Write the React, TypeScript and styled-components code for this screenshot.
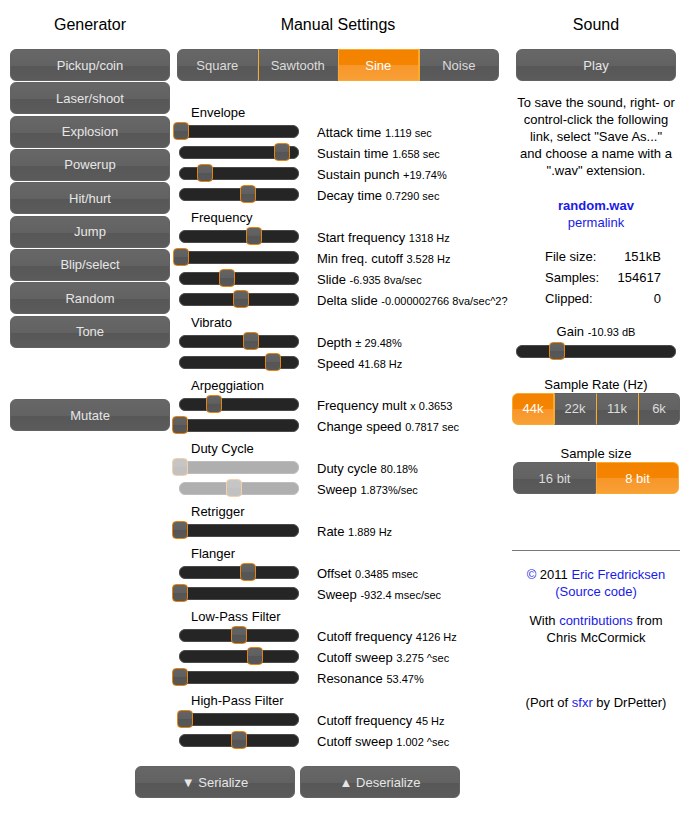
import React from 'react';
import styled, { createGlobalStyle } from 'styled-components';

const GlobalStyle = createGlobalStyle`
  body {
    margin: 0;
    background: #ffffff;
    font-family: "Liberation Sans", Arial, sans-serif;
    font-size: 13px;
    color: #111;
  }
`;

// --- layout ---
const Page = styled.div`
  width: 687px;
  height: 813px;
  box-sizing: border-box;
  padding-left: 10px;
`;

const Columns = styled.div`
  display: flex;
  align-items: flex-start;
`;

const Column = styled.div<{ $width: number; $gap?: number }>`
  width: ${p => p.$width}px;
  margin-left: ${p => p.$gap ?? 0}px;
  display: flex;
  flex-direction: column;
`;

const ColumnTitle = styled.h2`
  margin: 0;
  padding: 15px 0 14px;
  font-size: 16px;
  line-height: 20px;
  font-weight: normal;
  text-align: center;
  color: #000;
`;

// --- buttons ---
const glass = `linear-gradient(to bottom, #676767 0%, #626262 52%, #575757 52%, #5b5b5b 100%)`;
const glassActive = `linear-gradient(to bottom, #f28200 0%, #f58400 50%, #f7962a 50%, #f8a036 100%)`;

const Button = styled.div<{ $mt?: number; $mx?: number }>`
  height: 32px;
  box-sizing: border-box;
  margin: ${p => p.$mt ?? 0}px ${p => p.$mx ?? 0}px 0;
  border: 1px solid #626262;
  border-radius: 6px;
  background: ${glass};
  color: #e6e6e6;
  font-size: 13px;
  display: flex;
  align-items: center;
  justify-content: center;
  cursor: pointer;
`;

const GeneratorList = styled.div`
  display: flex;
  flex-direction: column;
  gap: 1.34px;
`;

const ButtonSet = styled.div<{ $mx?: number }>`
  display: flex;
  height: 32px;
  margin: 0 ${p => p.$mx ?? 0}px;
`;

const SetItem = styled.div<{ $active?: boolean }>`
  flex: 1;
  box-sizing: border-box;
  display: flex;
  align-items: center;
  justify-content: center;
  font-size: 13px;
  cursor: pointer;
  color: ${p => (p.$active ? '#ffffff' : '#dcdcdc')};
  background: ${p => (p.$active ? glassActive : glass)};
  border: 1px solid ${p => (p.$active ? '#fbab2c' : '#626262')};
  & + & {
    border-left-color: ${p => (p.$active ? '#fbab2c' : '#575757')};
  }
  &:first-child {
    border-radius: 6px 0 0 6px;
  }
  &:last-child {
    border-radius: 0 6px 6px 0;
  }
`;

// --- sliders ---
const Track = styled.div<{ $width: number; $disabled?: boolean }>`
  position: relative;
  flex-shrink: 0;
  width: ${p => p.$width}px;
  height: 13px;
  box-sizing: border-box;
  border: 1px solid #4a4a4a;
  border-radius: 6px;
  background: #252525;
  opacity: ${p => (p.$disabled ? 0.36 : 1)};
`;

const Handle = styled.div`
  position: absolute;
  top: -4px;
  width: 16px;
  height: 18px;
  margin-left: -8px;
  box-sizing: border-box;
  border: 1px solid #e8830c;
  border-radius: 4px;
  background: linear-gradient(to bottom, #646464 0%, #5f5f5f 50%, #555555 50%, #585858 100%);
`;

const Slider = ({ value, width, disabled }: { value: number; width: number; disabled?: boolean }) => (
  <Track $width={width} $disabled={disabled}>
    <Handle style={{ left: `${value * 100}%` }} />
  </Track>
);

const Sections = styled.div`
  margin-top: 22.5px;
  display: flex;
  flex-direction: column;
`;

const Section = styled.div`
  margin-bottom: 4px;
`;

const SectionTitle = styled.div`
  height: 17px;
  line-height: 17px;
  padding-left: 14px;
  font-size: 13px;
  color: #000;
`;

const ParamRow = styled.div`
  height: 21px;
  display: flex;
  align-items: center;
  padding-left: 2px;
  gap: 18px;
`;

const ParamLabel = styled.span`
  font-size: 13px;
  color: #000;
  white-space: nowrap;
  padding-top: 2px;
`;

const Small = styled.span`
  font-size: 11px;
`;

// --- right column ---
const Info = styled.p<{ $mt: number }>`
  margin: ${p => p.$mt}px 0 0;
  text-align: center;
  line-height: 17px;
  font-size: 13px;
  color: #000;
`;

const Link = styled.a<{ $bold?: boolean }>`
  color: #1a1ae6;
  text-decoration: none;
  font-weight: ${p => (p.$bold ? 'bold' : 'normal')};
`;

const Stats = styled.div`
  margin: 15px 0 0 33px;
  width: 116px;
  display: grid;
  grid-template-columns: 1fr auto;
  grid-auto-rows: 21px;
  align-items: center;
  color: #000;
`;

const StatValue = styled.span`
  text-align: right;
`;

const Caption = styled.div<{ $mt: number }>`
  margin-top: ${p => p.$mt}px;
  text-align: center;
  line-height: 17px;
  color: #000;
`;

const GainRow = styled.div`
  margin: 4px 4px 0;
`;

const Rule = styled.hr`
  margin: 56px 0 0;
  border: none;
  border-top: 1px solid #777;
  height: 0;
`;

const Footer = styled.div`
  display: flex;
  gap: 5px;
  margin-top: 11.5px;
  padding-left: 125px;
`;

const FooterButton = styled(Button)`
  width: 160px;
`;

type Param = { label: string; value: string; pos: number; disabled?: boolean };

const sections: { title: string; params: Param[] }[] = [
  {
    title: 'Envelope',
    params: [
      { label: 'Attack time', value: '1.119 sec', pos: 0.005 },
      { label: 'Sustain time', value: '1.658 sec', pos: 0.867 },
      { label: 'Sustain punch', value: '+19.74%', pos: 0.208 },
      { label: 'Decay time', value: '0.7290 sec', pos: 0.575 },
    ],
  },
  {
    title: 'Frequency',
    params: [
      { label: 'Start frequency', value: '1318 Hz', pos: 0.629 },
      { label: 'Min freq. cutoff', value: '3.528 Hz', pos: 0.005 },
      { label: 'Slide', value: '-6.935 8va/sec', pos: 0.4 },
      { label: 'Delta slide', value: '-0.000002766 8va/sec^2?', pos: 0.52 },
    ],
  },
  {
    title: 'Vibrato',
    params: [
      { label: 'Depth', value: '± 29.48%', pos: 0.6 },
      { label: 'Speed', value: '41.68 Hz', pos: 0.79 },
    ],
  },
  {
    title: 'Arpeggiation',
    params: [
      { label: 'Frequency mult', value: 'x 0.3653', pos: 0.29 },
      { label: 'Change speed', value: '0.7817 sec', pos: 0 },
    ],
  },
  {
    title: 'Duty Cycle',
    params: [
      { label: 'Duty cycle', value: '80.18%', pos: 0, disabled: true },
      { label: 'Sweep', value: '1.873%/sec', pos: 0.458, disabled: true },
    ],
  },
  {
    title: 'Retrigger',
    params: [{ label: 'Rate', value: '1.889 Hz', pos: 0 }],
  },
  {
    title: 'Flanger',
    params: [
      { label: 'Offset', value: '0.3485 msec', pos: 0.575 },
      { label: 'Sweep', value: '-932.4 msec/sec', pos: 0 },
    ],
  },
  {
    title: 'Low-Pass Filter',
    params: [
      { label: 'Cutoff frequency', value: '4126 Hz', pos: 0.5 },
      { label: 'Cutoff sweep', value: '3.275 ^sec', pos: 0.638 },
      { label: 'Resonance', value: '53.47%', pos: 0 },
    ],
  },
  {
    title: 'High-Pass Filter',
    params: [
      { label: 'Cutoff frequency', value: '45 Hz', pos: 0.045 },
      { label: 'Cutoff sweep', value: '1.002 ^sec', pos: 0.504 },
    ],
  },
];

const generators = ['Pickup/coin', 'Laser/shoot', 'Explosion', 'Powerup', 'Hit/hurt', 'Jump', 'Blip/select', 'Random', 'Tone'];
const waves = ['Square', 'Sawtooth', 'Sine', 'Noise'];

export default function App() {
  return (
    <Page>
      <GlobalStyle />
      <Columns>
        <Column $width={160}>
          <ColumnTitle>Generator</ColumnTitle>
          <GeneratorList>
            {generators.map(g => (
              <Button key={g}>{g}</Button>
            ))}
          </GeneratorList>
          <Button $mt={51.7}>Mutate</Button>
        </Column>

        <Column $width={322} $gap={7}>
          <ColumnTitle>Manual Settings</ColumnTitle>
          <ButtonSet>
            {waves.map(w => (
              <SetItem key={w} $active={w === 'Sine'}>{w}</SetItem>
            ))}
          </ButtonSet>
          <Sections>
            {sections.map(s => (
              <Section key={s.title}>
                <SectionTitle>{s.title}</SectionTitle>
                {s.params.map(p => (
                  <ParamRow key={p.label}>
                    <Slider value={p.pos} width={120} disabled={p.disabled} />
                    <ParamLabel>
                      {p.label} <Small>{p.value}</Small>
                    </ParamLabel>
                  </ParamRow>
                ))}
              </Section>
            ))}
          </Sections>
        </Column>

        <Column $width={168} $gap={13}>
          <ColumnTitle>Sound</ColumnTitle>
          <Button $mx={4}>Play</Button>
          <Info $mt={12.5}>
            To save the sound, right- or
            <br />
            control-click the following
            <br />
            link, select "Save As..."
            <br />
            and choose a name with a
            <br />
            ".wav" extension.
          </Info>
          <Info $mt={18}>
            <Link $bold>random.wav</Link>
            <br />
            <Link>permalink</Link>
          </Info>
          <Stats>
            <span>File size:</span>
            <StatValue>151kB</StatValue>
            <span>Samples:</span>
            <StatValue>154617</StatValue>
            <span>Clipped:</span>
            <StatValue>0</StatValue>
          </Stats>
          <Caption $mt={14}>
            Gain <Small>-10.93 dB</Small>
          </Caption>
          <GainRow>
            <Slider value={0.256} width={160} />
          </GainRow>
          <Caption $mt={18}>Sample Rate (Hz)</Caption>
          <ButtonSet>
            {['44k', '22k', '11k', '6k'].map(r => (
              <SetItem key={r} $active={r === '44k'}>{r}</SetItem>
            ))}
          </ButtonSet>
          <Caption $mt={20.5}>Sample size</Caption>
          <ButtonSet $mx={1}>
            {['16 bit', '8 bit'].map(r => (
              <SetItem key={r} $active={r === '8 bit'}>{r}</SetItem>
            ))}
          </ButtonSet>
          <Rule />
          <Info $mt={15}>
            <Link>©</Link> 2011 <Link>Eric Fredricksen</Link>
            <br />
            <Link>(Source code)</Link>
          </Info>
          <Info $mt={12}>
            With <Link>contributions</Link> from
            <br />
            Chris McCormick
          </Info>
          <Info $mt={48}>
            (Port of <Link>sfxr</Link> by DrPetter)
          </Info>
        </Column>
      </Columns>
      <Footer>
        <FooterButton>▼ Serialize</FooterButton>
        <FooterButton>▲ Deserialize</FooterButton>
      </Footer>
    </Page>
  );
}
